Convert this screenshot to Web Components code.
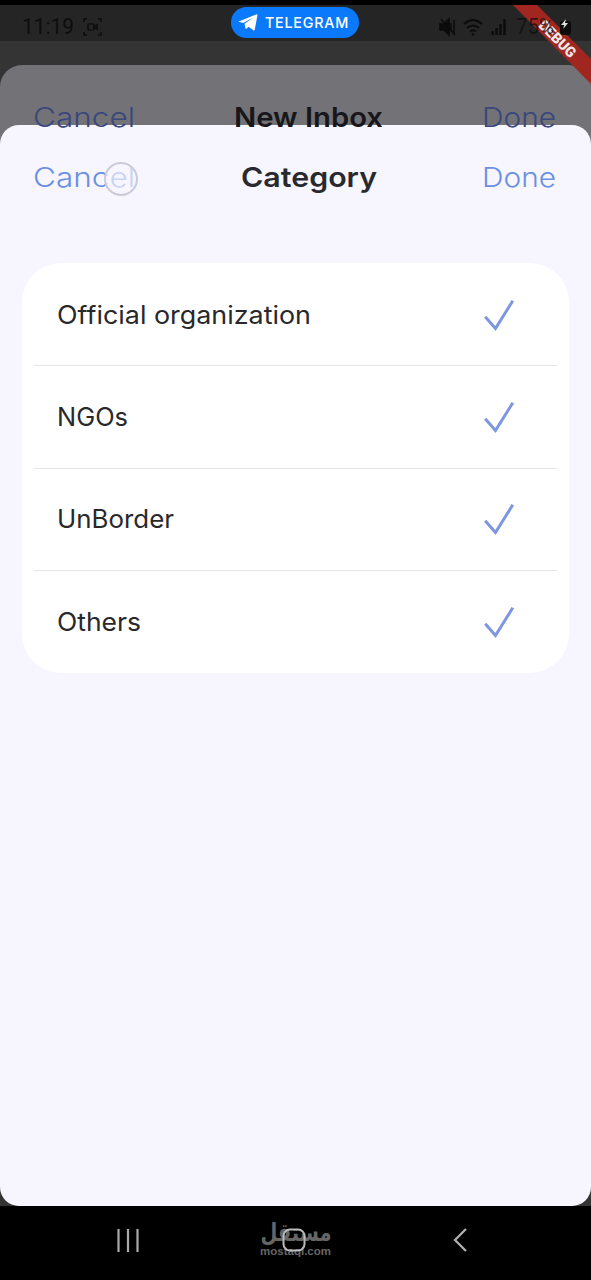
<!DOCTYPE html>
<html lang="en">
<head>
<meta charset="utf-8">
<title>Category</title>
<style>
html,body{margin:0;background:#000}
body{width:591px;height:1280px;overflow:hidden;font-family:Inter,"Open Sans",sans-serif}
</style>
</head>
<body>
<phone-screen>
  <status-bar slot="status"></status-bar>
  <modal-sheet slot="sheets" class="back" heading="New Inbox" heading-width="149"></modal-sheet>
  <modal-sheet slot="sheets" heading="Category" heading-width="136">
    <option-list>
      <option-row width="254">Official organization</option-row>
      <option-row width="71">NGOs</option-row>
      <option-row width="117">UnBorder</option-row>
      <option-row width="84">Others</option-row>
    </option-list>
  </modal-sheet>
  <nav-bar slot="nav"></nav-bar>
</phone-screen>
<script>
const define = (name, html, setup) => customElements.define(name, class extends HTMLElement {
  connectedCallback() {
    if (this.shadowRoot) return;
    this.attachShadow({mode: 'open'}).innerHTML = typeof html === 'function' ? html(this) : html;
    if (setup) setup(this);
  }
});

// Widens or narrows its text so that it fills the width asked for.
define('fit-text', '<style>:host{display:inline-block;white-space:nowrap}span{display:inline-block;transform-origin:0 50%}</style><span><slot></slot></span>', el => {
  const span = el.shadowRoot.querySelector('span');
  const target = +el.getAttribute('width');
  const natural = span.getBoundingClientRect().width;
  span.style.transform = `scaleX(${target / natural})`;
  el.style.width = target + 'px';
});

define('option-row', el => `<style>
  :host{display:flex;align-items:center;justify-content:space-between;box-sizing:border-box;height:102.3px;margin:0 12px;padding:0 42px 0 22.5px;border-bottom:1.5px solid #e5e5e8;font-size:25px;font-weight:400;color:#29292c}
  :host(:last-child){border-bottom-color:transparent}
  svg{width:32px;height:34px}
  </style><fit-text width="${el.getAttribute('width')}">${el.textContent}</fit-text>
  <svg viewBox="0 0 32 34"><path d="M2.2 18.8 12.5 30.5 29.8 2.8" fill="none" stroke="#7c96e2" stroke-width="3"/></svg>`);

define('option-list', `<style>:host{display:block;box-sizing:border-box;margin:34px 22px 0;height:410px;padding-top:1px;background:#fff;border-radius:39px;overflow:hidden}</style><slot></slot>`);

define('modal-sheet', el => `<style>
  :host{display:block;grid-area:1/1;margin-top:84px;height:1081px;border-radius:19px;background:#f7f6ff;overflow:hidden;--link:#6b8fe3;color:#29292e}
  :host(.back){margin-top:24px;height:1141px;border-radius:22px;background:#737276;--link:#39477c;color:#17171b}
  header{display:flex;align-items:center;justify-content:space-between;height:104px;padding:0 35px 0 33px;font-size:27.5px;line-height:40px}
  .link{color:var(--link);font-weight:350}
  h1{margin:0;font-size:27.5px;font-weight:600}
  </style><header><fit-text class="link" width="102">Cancel</fit-text>
  <h1><fit-text width="${el.getAttribute('heading-width')}">${el.getAttribute('heading')}</fit-text></h1>
  <fit-text class="link" width="74">Done</fit-text></header>
  <slot></slot>`);

define('status-bar', `<style>
  :host{display:flex;align-items:center;box-sizing:border-box;height:36px;padding:8px 19px 0 22px;color:#0d0d0e;font:400 22px/28px Roboto,sans-serif}
  .shot{width:19px;height:18px;margin:0 auto 0 9px}
  .icons{width:70px;height:22px;margin-right:7px}
  .pct{color:#0d0d0ebb}
  .batt{width:15px;height:17px;margin-left:3px}
  </style>
  <fit-text width="52">11:19</fit-text>
  <svg class="shot" viewBox="0 0 19 18" fill="none" stroke="#0f0f10" stroke-width="1.7"><path d="M1 4V1h3M15 1h3v3M18 14v3h-3M4 17H1v-3"/><rect x="5" y="6" width="6" height="6" rx="1"/><path d="m11 9 3-2v4z"/></svg>
  <svg class="icons" viewBox="0 0 70 22" fill="none" stroke="#0b0b0c" stroke-width="2">
    <path d="M1 8h4l5-5v16l-5-5H1zM2 3l14 16" fill="#0b0b0c" stroke-width="1.6"/><path d="M12 7v7M15 4v14" stroke-width="1.5"/>
    <path d="M25 8q9-8 18 0M28 12q6-5 12 0M31 15.500q3-2.500 6 0"/><circle cx="34" cy="18.500" r="1.300" fill="#0b0b0c" stroke="none"/>
    <path d="M53.500 19v-4M57.500 19v-7M61.500 19V8M65.500 19V3" stroke-width="2.400"/>
  </svg>
  <fit-text class="pct" width="38">75%</fit-text>
  <svg class="batt" viewBox="0 0 15 17"><rect x="3" y="2" width="11" height="14" rx="3" fill="#0b0b0c"/><path d="M9 0 4 6h3.200l-1 4L11 4H8z" fill="#ddd"/></svg>`);

define('telegram-pill', `<style>
  :host{display:flex;align-items:center;gap:7px;box-sizing:border-box;width:128px;height:31px;padding:0 10px 0 7px;border-radius:16px;background:#0b79fb;color:#fff;font:500 15px/31px Inter,sans-serif}
  svg{width:20px;height:17px;flex:none}
  fit-text{letter-spacing:.8px}
  </style><svg viewBox="0 0 20 17"><path d="M.7 7.600 18.300.4q1.300-.5 1.100 1l-2.600 14q-.4 1.600-1.800.6l-4.400-3.200-2.200 2q-.7.600-.9-.5l-1-4.500 8.500-6-9.800 5.300-4.500-1.300Q.1 7.900.7 7.600z" fill="#fff"/></svg>
  <fit-text width="84">TELEGRAM</fit-text>`);

define('debug-ribbon', `<style>:host{display:block;width:91px;height:90px}svg{display:block}
  text{font:900 14.500px Roboto,sans-serif}</style>
  <svg width="91" height="90" viewBox="500 5 91 90"><path d="M513 5H537L591 59V84Z" fill="#a1261f"/>
  <text transform="translate(557.500 39) rotate(45)" y="5" text-anchor="middle" textLength="46" lengthAdjust="spacingAndGlyphs" fill="#eee7e7">DEBUG</text></svg>`);

define('touch-point', `<style>:host{display:block;box-sizing:border-box;width:34px;height:34px;border:2px solid #cbcad8;border-radius:50%;background:#f7f6ffaa}</style>`);

define('site-mark', `<style>
  :host{display:block;width:72px;color:#666}
  svg{display:block;overflow:visible}
  .ar{font:700 25px "DejaVu Sans",sans-serif}.en{font:700 11px "Liberation Sans",sans-serif}
  </style><svg width="72" height="36" viewBox="0 0 72 36" fill="currentColor">
  <text class="ar" x="36" y="17" text-anchor="middle" direction="rtl" textLength="71" lengthAdjust="spacingAndGlyphs">مستقل</text>
  <text class="en" x="0" y="30.500" textLength="71" lengthAdjust="spacingAndGlyphs">mostaql.com</text></svg>`);

define('nav-bar', `<style>
  :host{display:flex;align-items:flex-start;justify-content:space-between;box-sizing:border-box;height:74px;padding:21px 123px 0 116px;background:#000}
  svg{display:block}
  .home{display:grid;justify-items:center}
  .home>*{grid-area:1/1}
  .home>svg{margin-right:4px}
  site-mark{margin-top:-3px}
  </style>
  <svg width="24" height="26" viewBox="0 0 24 26" stroke="#aaa" stroke-width="2.200"><path d="M2.500 2v23M12 2v23M21.500 2v23"/></svg>
  <div class="home"><site-mark></site-mark><svg width="24" height="26" viewBox="0 0 24 26"><rect x="1.500" y="2.500" width="21" height="21" rx="6.500" fill="none" stroke="#bbb" stroke-width="2"/></svg></div>
  <svg width="16" height="26" viewBox="0 0 16 26"><path d="M14 2 3 13l11 11" fill="none" stroke="#b2b2b2" stroke-width="2.200"/></svg>`);

define('phone-screen', `<style>
  :host{display:flex;flex-direction:column;position:relative;box-sizing:border-box;width:591px;height:1280px;padding-top:5px;background:linear-gradient(#000 5px,#252526 5px 41px,#000 41px);overflow:hidden}
  .stage{display:grid;align-items:start;height:1165px;background:#343435;margin:0}
  .over{position:absolute}
  ::slotted(status-bar){position:relative;z-index:1}
  telegram-pill{left:231px;top:7px;z-index:2}
  debug-ribbon{right:0;top:5px}
  touch-point{left:104px;top:162px}
  </style><slot name="status"></slot><div class="stage"><slot name="sheets"></slot></div><slot name="nav"></slot>
  <debug-ribbon class="over"></debug-ribbon><telegram-pill class="over"></telegram-pill><touch-point class="over"></touch-point>`);
</script>
</body>
</html>
